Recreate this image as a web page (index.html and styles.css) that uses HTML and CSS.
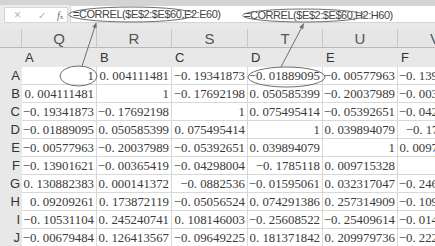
FILE: index.html
```html
<!DOCTYPE html>
<html>
<head>
<meta charset="utf-8">
<link rel="stylesheet" href="styles.css">
</head>
<body>
<div class="app">
  <div class="topstrip"></div>
  <div class="fbar">
    <div class="fbar-btns">
      <span class="btn-x">×</span>
      <span class="btn-ok">✓</span>
      <span class="btn-fx"><i>f</i><span class="fx-x">x</span></span>
    </div>
    <div class="fbar-input"><span class="formula">=CORREL($E$2:$E$60,E2:E60)</span></div>
  </div>
  <div class="gap"></div>
  <div class="sheet">
    <div class="corner"></div>
    <div class="colhead">Q</div><div class="colhead">R</div><div class="colhead">S</div><div class="colhead">T</div><div class="colhead">U</div><div class="colhead">V</div>

    <div class="corner2"></div>
    <div class="sublabel">A</div><div class="sublabel">B</div><div class="sublabel">C</div><div class="sublabel">D</div><div class="sublabel">E</div><div class="sublabel">F</div>

    <div class="rowhead">A</div>
    <div class="cell">1</div><div class="cell">0. 004111481</div><div class="cell">−0. 19341873</div><div class="cell">−0. 01889095</div><div class="cell">−0. 00577963</div><div class="cell">−0. 13901621</div>

    <div class="rowhead">B</div>
    <div class="cell">0. 004111481</div><div class="cell">1</div><div class="cell">−0. 17692198</div><div class="cell">0. 050585399</div><div class="cell">−0. 20037989</div><div class="cell">−0. 00365419</div>

    <div class="rowhead">C</div>
    <div class="cell">−0. 19341873</div><div class="cell">−0. 17692198</div><div class="cell">1</div><div class="cell">0. 075495414</div><div class="cell">−0. 05392651</div><div class="cell">−0. 04298004</div>

    <div class="rowhead">D</div>
    <div class="cell">−0. 01889095</div><div class="cell">0. 050585399</div><div class="cell">0. 075495414</div><div class="cell">1</div><div class="cell">0. 039894079</div><div class="cell">−0. 1785118</div>

    <div class="rowhead">E</div>
    <div class="cell">−0. 00577963</div><div class="cell">−0. 20037989</div><div class="cell">−0. 05392651</div><div class="cell">0. 039894079</div><div class="cell">1</div><div class="cell">0. 009715328</div>

    <div class="rowhead">F</div>
    <div class="cell">−0. 13901621</div><div class="cell">−0. 00365419</div><div class="cell">−0. 04298004</div><div class="cell">−0. 1785118</div><div class="cell">0. 009715328</div><div class="cell">1</div>

    <div class="rowhead">G</div>
    <div class="cell">0. 130882383</div><div class="cell">0. 000141372</div><div class="cell">−0. 0882536</div><div class="cell">−0. 01595061</div><div class="cell">0. 032317047</div><div class="cell">−0. 24617203</div>

    <div class="rowhead">H</div>
    <div class="cell">0. 09209261</div><div class="cell">0. 173872119</div><div class="cell">−0. 05056524</div><div class="cell">0. 074291386</div><div class="cell">0. 257314909</div><div class="cell">−0. 10932784</div>

    <div class="rowhead">I</div>
    <div class="cell">−0. 10531104</div><div class="cell">0. 245240741</div><div class="cell">0. 108146003</div><div class="cell">−0. 25608522</div><div class="cell">−0. 25409614</div><div class="cell">−0. 01458237</div>

    <div class="rowhead">J</div>
    <div class="cell">−0. 00679484</div><div class="cell">0. 126413567</div><div class="cell">−0. 09649225</div><div class="cell">0. 181371842</div><div class="cell">0. 209979736</div><div class="cell">−0. 22234915</div>
  </div>

  <span class="formula formula2">=CORREL($E$2:$E$60,H2:H60)</span>
  <svg class="annot" width="435" height="246" viewBox="0 0 435 246">
    <g fill="none" stroke="#6e6e6e" stroke-width="1">
      <ellipse cx="131.5" cy="14.5" rx="63" ry="7.5"/>
      <ellipse cx="303.5" cy="15.5" rx="61" ry="6.5"/>
      <ellipse cx="78.5" cy="76" rx="18.5" ry="10"/>
      <ellipse cx="286.5" cy="77" rx="38.5" ry="10"/>
      <line x1="82" y1="66" x2="94.6" y2="27.7"/>
      <line x1="281" y1="67" x2="301.3" y2="28.3"/>
    </g>
    <g fill="#6e6e6e">
      <polygon points="96.5,22 96.7,28.4 92.5,27"/>
      <polygon points="304,23 303.2,29.3 299.3,27.3"/>
    </g>
  </svg>
</div>
</body>
</html>
```

FILE: styles.css
```css
html, body {
  margin: 0;
  padding: 0;
  background: #e8e8e8;
}

.app {
  position: relative;
  width: 435px;
  height: 246px;
  overflow: hidden;
  background: #e8e8e8;
  font-family: "Liberation Sans", Arial, sans-serif;
  color: #333;
}

.topstrip {
  height: 5px;
  background: #d4d4d4;
}

.fbar {
  display: flex;
  gap: 2px;
  height: 18px;
  padding-left: 4px;
  background: #ececec;
}

.fbar-btns {
  box-sizing: border-box;
  width: 64px;
  margin-top: 2px;
  height: 16px;
  background: #fff;
  border: 1px solid #d6d6d6;
  display: flex;
  align-items: center;
  font-size: 11px;
  color: #b4b4b4;
}

.btn-x {
  margin-left: 9px;
  width: 12px;
  font-size: 12px;
}

.btn-ok {
  margin-left: 12px;
  width: 12px;
  font-size: 10px;
}

.btn-fx {
  margin-left: 7px;
  font-family: "Liberation Serif", serif;
  font-size: 10px;
  color: #666;
}

.fx-x {
  font-size: 7px;
}

.fbar-input {
  flex: 1;
  box-sizing: border-box;
  background: #fff;
  border: 1px solid #d6d6d6;
  border-right: none;
  display: flex;
  align-items: center;
  padding-left: 2px;
}

.formula {
  font-family: "Liberation Sans", Arial, sans-serif;
  font-size: 11px;
  letter-spacing: -0.45px;
  color: #444;
  white-space: nowrap;
}

.formula2 {
  position: absolute;
  left: 244px;
  top: 9px;
  line-height: 13px;
}

.gap {
  height: 6px;
  background: #e8e8e8;
}

.sheet {
  display: grid;
  grid-template-columns: 22px 75px 75px 76px 75px 75px 75px;
  grid-auto-rows: 18px;
  grid-template-rows: 19px 19px;
  width: 473px;
}

.corner {
  box-sizing: border-box;
  background: #e6e6e6;
  border-right: 1px solid #c8c8c8;
  border-bottom: 1px solid #b8b8b8;
}

.colhead {
  box-sizing: border-box;
  background: #e6e6e6;
  border-right: 1px solid #c8c8c8;
  border-bottom: 1px solid #b8b8b8;
  text-align: center;
  font-size: 15px;
  line-height: 19px;
  color: #555;
}

.corner2 {
  background: #e8e8e8;
}

.sublabel {
  background: #e8e8e8;
  padding-left: 3px;
  font-size: 13px;
  line-height: 20px;
  color: #333;
}

.rowhead {
  background: #e8e8e8;
  text-align: right;
  padding-right: 2px;
  font-size: 13px;
  line-height: 18px;
  color: #333;
}

.cell {
  box-sizing: border-box;
  background: #fff;
  border-right: 1px solid #d8d8d8;
  border-bottom: 1px solid #d8d8d8;
  text-align: right;
  padding-right: 2px;
  font-family: "Liberation Serif", "Times New Roman", serif;
  font-size: 12.8px;
  line-height: 18px;
  color: #3a3a3a;
  white-space: nowrap;
  overflow: hidden;
}

.annot {
  position: absolute;
  left: 0;
  top: 0;
  pointer-events: none;
}
```
